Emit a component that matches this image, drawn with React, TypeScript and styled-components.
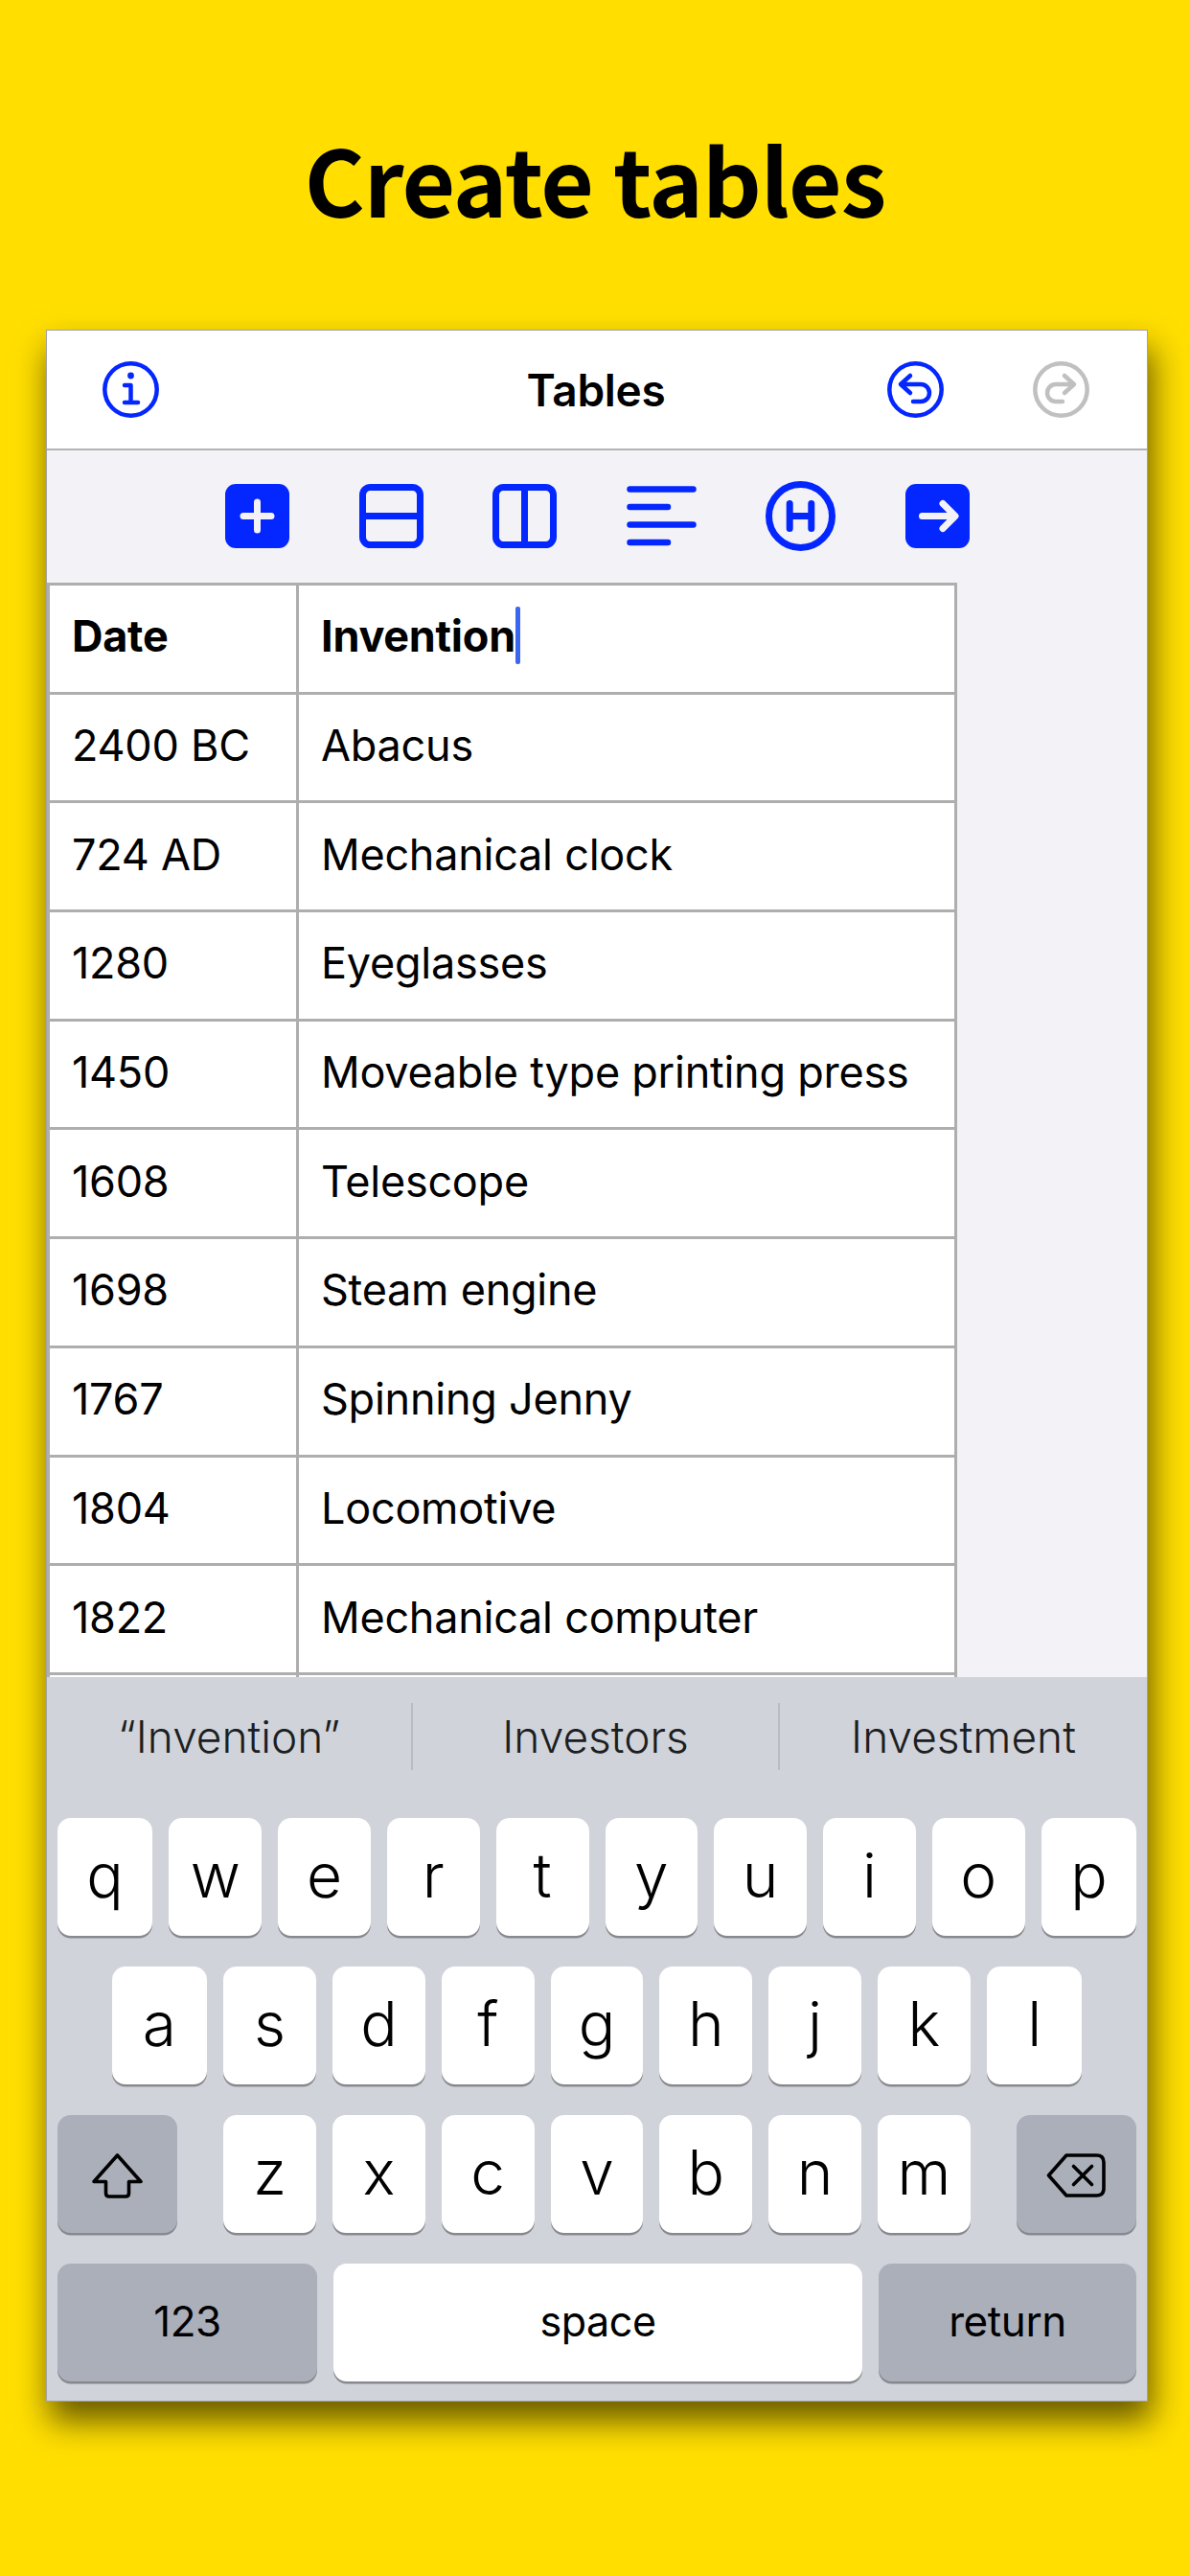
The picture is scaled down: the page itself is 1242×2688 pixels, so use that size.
import styled, { createGlobalStyle } from "styled-components"

const BLUE = "#0527ff"
const PAPER = "#f2f2f7"
const LINE = "#aeaeae"

const GlobalStyle = createGlobalStyle`
    html, body {
        margin: 0;
        padding: 0;
        background: #ffde00;
    }
    * {
        box-sizing: border-box;
    }
`

const Page = styled.div`
    width: 1242px;
    height: 2688px;
    background: #ffde00;
    overflow: hidden;
    font-family: Inter, "Liberation Sans", sans-serif;
    color: #000;
`

const Headline = styled.h1`
    margin: 0;
    height: 344px;
    padding-top: 121px;
    text-align: center;
    font-family: "Noto Sans CJK JP", "Noto Sans", sans-serif;
    font-weight: 700;
    font-size: 96px;
    line-height: 130px;
    letter-spacing: -1px;
`

const Panel = styled.div`
    width: 1150px;
    height: 2162px;
    margin-left: 48px;
    display: flex;
    flex-direction: column;
    border: 1px solid #a3a3a3;
    background: ${PAPER};
    box-shadow: 4px 20px 32px rgba(0, 0, 0, 0.6);
`

const NavBar = styled.div`
    height: 125px;
    flex: none;
    display: grid;
    grid-template-columns: 1fr auto 1fr;
    align-items: center;
    padding: 0 60px 0 58px;
    background: #fff;
    border-bottom: 2px solid #b4b4b4;
`

const NavTitle = styled.div`
    font-size: 46px;
    font-weight: 600;
    letter-spacing: -0.3px;
`

const NavRight = styled.div`
    display: flex;
    justify-content: flex-end;
    gap: 93px;
`

const Toolbar = styled.div`
    height: 138px;
    flex: none;
    display: flex;
    justify-content: center;
    align-items: center;
    gap: 72.5px;
    padding: 0 0 2px 1px;
`

const TableArea = styled.div`
    flex: 1;
    min-height: 0;
    overflow: hidden;
`

const TableGrid = styled.div`
    width: 950px;
    display: grid;
    grid-template-columns: 260px 687px;
    grid-auto-rows: 113.7px;
    background: #fff;
    border-top: 3px solid ${LINE};
    border-left: 3px solid ${LINE};
`

const Cell = styled.div<{ $head?: boolean }>`
    display: flex;
    align-items: center;
    padding: 0 0 5px 23px;
    border-right: 3px solid ${LINE};
    border-bottom: 3px solid ${LINE};
    font-size: 45px;
    letter-spacing: -0.25px;
    font-weight: ${(p) => (p.$head ? 700 : 400)};
`

const CaretWrap = styled.span`
    position: relative;
`

const Caret = styled.span`
    position: absolute;
    right: -5px;
    top: -3px;
    width: 5px;
    height: 60px;
    border-radius: 2px;
    background: #3b66f0;
`

const Keyboard = styled.div`
    height: 755px;
    flex: none;
    padding-bottom: 20px;
    background: #d0d3da;
    display: flex;
    flex-direction: column;
`

const Suggestions = styled.div`
    height: 147px;
    flex: none;
    display: grid;
    grid-template-columns: 382px 383px 383px;
    padding-top: 27px;
    padding-bottom: 50px;
`

const Suggestion = styled.div<{ $divider?: boolean }>`
    display: flex;
    align-items: center;
    justify-content: center;
    font-size: 46px;
    font-weight: 300;
    color: #1c1e21;
    border-right: ${(p) => (p.$divider ? "2px solid #b9bcc3" : "none")};
`

const KeyRows = styled.div`
    display: flex;
    flex-direction: column;
    gap: 32px;
    padding: 0 11px;
`

const KeyRow = styled.div<{ $split?: boolean }>`
    display: flex;
    justify-content: ${(p) => (p.$split ? "space-between" : "center")};
    gap: 17px;
`

const KeyGroup = styled.div`
    display: flex;
    gap: 17px;
`

const Key = styled.div<{ $w?: number; $dark?: boolean; $label?: number; $glyph?: boolean }>`
    width: ${(p) => p.$w ?? 96.8}px;
    height: 123px;
    flex: none;
    display: flex;
    align-items: center;
    justify-content: center;
    border-radius: 14px;
    background: ${(p) => (p.$dark ? "#abafba" : "#fff")};
    box-shadow: 0 2.5px 0 #88898e;
    font-size: ${(p) => p.$label ?? 64}px;
    font-weight: ${(p) => (p.$label ? 400 : 300)};
    letter-spacing: ${(p) => (p.$label ? "-0.4px" : "0")};
    padding: ${(p) => (p.$glyph ? "3px 0 0" : "0 0 4px")};
`

const Icon = styled.svg`
    display: block;
    flex: none;
`

const rows = [
    ["Date", "Invention"],
    ["2400 BC", "Abacus"],
    ["724 AD", "Mechanical clock"],
    ["1280", "Eyeglasses"],
    ["1450", "Moveable type printing press"],
    ["1608", "Telescope"],
    ["1698", "Steam engine"],
    ["1767", "Spinning Jenny"],
    ["1804", "Locomotive"],
    ["1822", "Mechanical computer"],
    ["", ""],
]

const stroke = { fill: "none", strokeLinecap: "round", strokeLinejoin: "round" } as const

function InfoIcon() {
    return <Icon width="59" height="59" viewBox="0 0 59 59">
        <circle cx="29.5" cy="29.5" r="27.2" stroke={BLUE} strokeWidth="4.5" fill="none" />
        <circle cx="29.5" cy="15" r="3.4" fill={BLUE} />
        <path d="M23 25H29.5V43M23 43H37" stroke={BLUE} strokeWidth="4.5" {...stroke} />
    </Icon>
}

function UndoIcon() {
    return <Icon width="59" height="59" viewBox="0 0 59 59">
        <circle cx="29.5" cy="29.5" r="27.2" stroke={BLUE} strokeWidth="4.5" fill="none" />
        <path d="M24 15L14 24L24 33M14 24H35A9 9 0 0 1 35 42H27" stroke={BLUE} strokeWidth="4.5" {...stroke} />
    </Icon>
}

function RedoIcon() {
    return <Icon width="59" height="59" viewBox="0 0 59 59">
        <circle cx="29.5" cy="29.5" r="27.2" stroke="#c0c0c0" strokeWidth="4.5" fill="none" />
        <path d="M33 15L43 24L33 33M43 24H24A9 9 0 0 0 24 42H31" stroke="#c0c0c0" strokeWidth="4.5" {...stroke} />
    </Icon>
}

function AddIcon() {
    return <Icon width="67" height="67" viewBox="0 0 67 67">
        <rect width="67" height="67" rx="11" fill={BLUE} />
        <path d="M19 33.5H48M33.5 19V48" stroke={PAPER} strokeWidth="7" {...stroke} />
    </Icon>
}

function RowsIcon() {
    return <Icon width="67" height="67" viewBox="0 0 67 67">
        <rect x="3.5" y="3.5" width="60" height="60" rx="8" stroke={BLUE} strokeWidth="7" fill="none" />
        <path d="M3.5 33.5H63.5" stroke={BLUE} strokeWidth="7" />
    </Icon>
}

function ColumnsIcon() {
    return <Icon width="67" height="67" viewBox="0 0 67 67">
        <rect x="3.5" y="3.5" width="60" height="60" rx="8" stroke={BLUE} strokeWidth="7" fill="none" />
        <path d="M33.5 3.5V63.5" stroke={BLUE} strokeWidth="7" />
    </Icon>
}

function AlignIcon() {
    return <Icon width="73" height="67" viewBox="0 0 73 67">
        <path d="M3.5 5.5H69.5M3.5 24H43M3.5 42.5H69.5M3.5 61H43" stroke={BLUE} strokeWidth="6.5" {...stroke} />
    </Icon>
}

function HeaderIcon() {
    return <Icon width="73" height="73" viewBox="0 0 73 73">
        <circle cx="36.5" cy="36.5" r="33" stroke={BLUE} strokeWidth="7" fill="none" />
        <path d="M25.2 23.5V49.5M47.8 23.5V49.5M25.2 36.5H47.8" stroke={BLUE} strokeWidth="7" {...stroke} />
    </Icon>
}

function NextIcon() {
    return <Icon width="67" height="67" viewBox="0 0 67 67">
        <rect width="67" height="67" rx="11" fill={BLUE} />
        <path d="M17.5 33.5H51M39 20.5L52 33.5L39 46.5" stroke={PAPER} strokeWidth="7" {...stroke} />
    </Icon>
}

function ShiftIcon() {
    return <Icon width="53" height="47" viewBox="0 0 53 47">
        <path d="M26.5 2L51 29.5H38.5V41.5Q38.5 45 35 45H18Q14.5 45 14.5 41.5V29.5H2Z" stroke="#000" strokeWidth="3.6" {...stroke} />
    </Icon>
}

function DeleteIcon() {
    return <Icon width="62" height="46" viewBox="0 0 62 46">
        <path d="M2.5 23L21 2H52.5Q60 2 60 9.5V36.5Q60 44 52.5 44H21Z" stroke="#000" strokeWidth="3.6" {...stroke} />
        <path d="M28.5 13.5L47.5 32.5M47.5 13.5L28.5 32.5" stroke="#000" strokeWidth="3.6" {...stroke} />
    </Icon>
}

function letterWidth(row: string, i: number) {
    return i === 0 || i === row.length - 1 ? 99.7 : undefined
}

export default function App() {
    return <Page>
        <GlobalStyle />
        <Headline>Create tables</Headline>
        <Panel>
            <NavBar>
                <InfoIcon />
                <NavTitle>Tables</NavTitle>
                <NavRight>
                    <UndoIcon />
                    <RedoIcon />
                </NavRight>
            </NavBar>
            <Toolbar>
                <AddIcon />
                <RowsIcon />
                <ColumnsIcon />
                <AlignIcon />
                <HeaderIcon />
                <NextIcon />
            </Toolbar>
            <TableArea>
                <TableGrid>
                    {rows.map((row, i) => [
                        <Cell key={`d${i}`} $head={i === 0}>{row[0]}</Cell>,
                        <Cell key={`t${i}`} $head={i === 0}>
                            {i === 0
                                ? <CaretWrap>{row[1]}<Caret /></CaretWrap>
                                : row[1]}
                        </Cell>,
                    ])}
                </TableGrid>
            </TableArea>
            <Keyboard>
                <Suggestions>
                    <Suggestion $divider>“Invention”</Suggestion>
                    <Suggestion $divider>Investors</Suggestion>
                    <Suggestion>Investment</Suggestion>
                </Suggestions>
                <KeyRows>
                    <KeyRow>
                        {[..."qwertyuiop"].map((k, i) => <Key key={k} $w={letterWidth("qwertyuiop", i)}>{k}</Key>)}
                    </KeyRow>
                    <KeyRow>
                        {[..."asdfghjkl"].map((k, i) => <Key key={k} $w={letterWidth("asdfghjkl", i)}>{k}</Key>)}
                    </KeyRow>
                    <KeyRow $split>
                        <Key $w={125} $dark $glyph><ShiftIcon /></Key>
                        <KeyGroup>
                            {[..."zxcvbnm"].map((k) => <Key key={k}>{k}</Key>)}
                        </KeyGroup>
                        <Key $w={125} $dark $glyph><DeleteIcon /></Key>
                    </KeyRow>
                    <KeyRow>
                        <Key $w={271} $dark $label={44}>123</Key>
                        <Key $w={552} $label={43}>space</Key>
                        <Key $w={269} $dark $label={44}>return</Key>
                    </KeyRow>
                </KeyRows>
            </Keyboard>
        </Panel>
    </Page>
}
